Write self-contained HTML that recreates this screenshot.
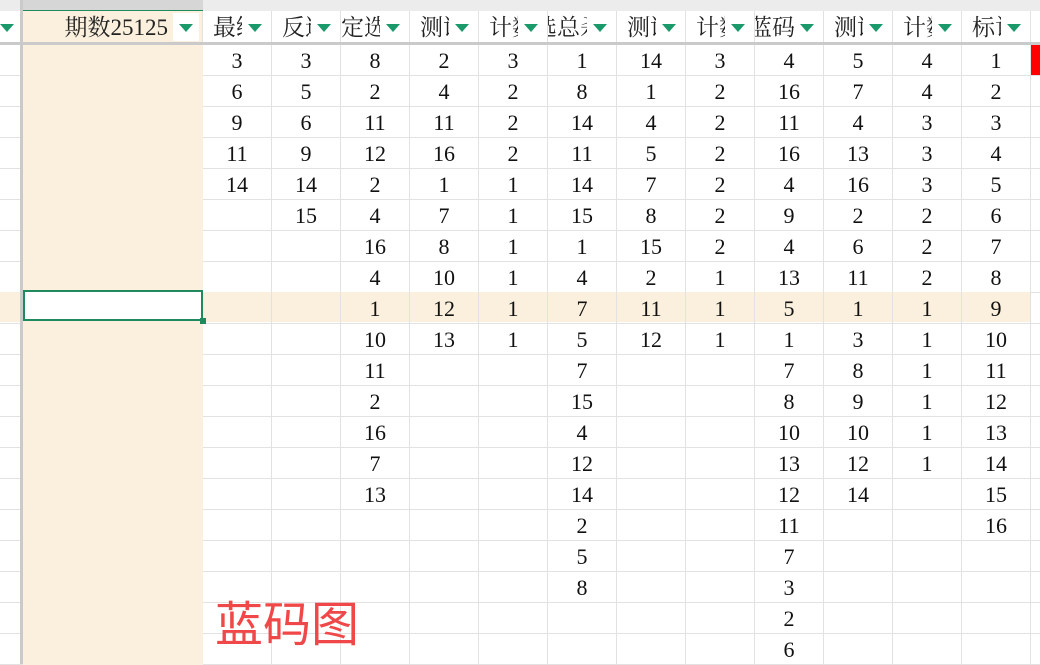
<!DOCTYPE html>
<html><head><meta charset="utf-8"><style>
body{margin:0;width:1040px;height:664px;overflow:hidden;background:#fff;position:relative;font-family:"Liberation Serif","Noto Serif CJK SC",serif;}
.abs{position:absolute}
#grid{left:0;top:45px;width:1040px;height:620px;background:repeating-linear-gradient(to bottom,transparent 0,transparent 30px,#e2e2e2 30px,#e2e2e2 31px)}
.col{position:absolute;top:45px;height:620px;border-right:1px solid #e2e2e2;box-sizing:border-box;text-align:center;font-size:22px;line-height:31px;color:#111}
.hdr{position:absolute;top:11px;height:31px;border-right:1px solid #e2e2e2;box-sizing:border-box;overflow:hidden;font-family:"Liberation Serif","Noto Serif CJK SC",serif;font-size:23px;line-height:34px;color:#222;white-space:nowrap}
.btn{position:absolute;top:13px;width:26px;height:28px;background:#fff}
.btn:after{content:"";position:absolute;left:6px;top:11px;border-left:7px solid transparent;border-right:7px solid transparent;border-top:8px solid #1a9a6a}
</style></head><body>
<div class="abs" style="left:0;top:0;width:1040px;height:11px;background:#ececec"></div>
<div class="abs" style="left:23px;top:0;width:180px;height:10px;background:#d6d6d6;border-bottom:2px solid #1e8a5e"></div>
<div class="abs" style="left:0;top:42px;width:1040px;height:3px;background:#cacaca"></div>
<div class="abs" id="grid"></div>
<div class="abs" style="left:23px;top:11px;width:180px;height:31px;background:#faf0dd"></div>
<div class="abs" style="left:23px;top:45px;width:180px;height:620px;background:#faf0dd"></div>
<div class="abs" style="left:0;top:292px;width:1030px;height:30px;background:#faf0dd"></div>
<div class="abs" style="left:20px;top:0;width:3px;height:664px;background:#cacaca"></div>
<div class="abs" style="left:1030px;top:45px;width:10px;height:30px;background:#f00"></div>
<div class="abs" style="left:23px;top:290px;width:180px;height:31px;box-sizing:border-box;border:2px solid #1e8a5e;background:#fff"></div>
<div class="abs" style="left:200px;top:318px;width:6px;height:6px;background:#1e8a5e"></div>
<div class="btn" style="left:-6px"></div>

<div class="hdr" style="left:23px;width:180px;"><span style="position:absolute;right:34px">期数25125</span></div>
<div class="hdr" style="left:203px;width:69px;padding-left:10px">最终</div>
<div class="hdr" style="left:272px;width:69px;padding-left:10px">反选</div>
<div class="hdr" style="left:341px;width:69px;padding-left:0">定选</div>
<div class="hdr" style="left:410px;width:69px;padding-left:10px">测试</div>
<div class="hdr" style="left:479px;width:69px;padding-left:10px">计数</div>
<div class="hdr" style="left:548px;width:69px;"><span style="position:absolute;left:-14px">选总杀</span></div>
<div class="hdr" style="left:617px;width:69px;padding-left:10px">测试</div>
<div class="hdr" style="left:686px;width:69px;padding-left:10px">计数</div>
<div class="hdr" style="left:755px;width:69px;"><span style="position:absolute;left:-6px">蓝码</span></div>
<div class="hdr" style="left:824px;width:69px;padding-left:10px">测试</div>
<div class="hdr" style="left:893px;width:69px;padding-left:10px">计数</div>
<div class="hdr" style="left:962px;width:69px;padding-left:10px">标记</div>
<div class="btn" style="left:173px"></div>
<div class="btn" style="left:242px"></div>
<div class="btn" style="left:311px"></div>
<div class="btn" style="left:380px"></div>
<div class="btn" style="left:449px"></div>
<div class="btn" style="left:518px"></div>
<div class="btn" style="left:587px"></div>
<div class="btn" style="left:656px"></div>
<div class="btn" style="left:725px"></div>
<div class="btn" style="left:794px"></div>
<div class="btn" style="left:863px"></div>
<div class="btn" style="left:932px"></div>
<div class="btn" style="left:1001px"></div>

<div class="col" style="left:203px;width:69px">3<br>6<br>9<br>11<br>14</div>
<div class="col" style="left:272px;width:69px">3<br>5<br>6<br>9<br>14<br>15</div>
<div class="col" style="left:341px;width:69px">8<br>2<br>11<br>12<br>2<br>4<br>16<br>4<br>1<br>10<br>11<br>2<br>16<br>7<br>13</div>
<div class="col" style="left:410px;width:69px">2<br>4<br>11<br>16<br>1<br>7<br>8<br>10<br>12<br>13</div>
<div class="col" style="left:479px;width:69px">3<br>2<br>2<br>2<br>1<br>1<br>1<br>1<br>1<br>1</div>
<div class="col" style="left:548px;width:69px">1<br>8<br>14<br>11<br>14<br>15<br>1<br>4<br>7<br>5<br>7<br>15<br>4<br>12<br>14<br>2<br>5<br>8</div>
<div class="col" style="left:617px;width:69px">14<br>1<br>4<br>5<br>7<br>8<br>15<br>2<br>11<br>12</div>
<div class="col" style="left:686px;width:69px">3<br>2<br>2<br>2<br>2<br>2<br>2<br>1<br>1<br>1</div>
<div class="col" style="left:755px;width:69px">4<br>16<br>11<br>16<br>4<br>9<br>4<br>13<br>5<br>1<br>7<br>8<br>10<br>13<br>12<br>11<br>7<br>3<br>2<br>6</div>
<div class="col" style="left:824px;width:69px">5<br>7<br>4<br>13<br>16<br>2<br>6<br>11<br>1<br>3<br>8<br>9<br>10<br>12<br>14</div>
<div class="col" style="left:893px;width:69px">4<br>4<br>3<br>3<br>3<br>2<br>2<br>2<br>1<br>1<br>1<br>1<br>1<br>1</div>
<div class="col" style="left:962px;width:69px">1<br>2<br>3<br>4<br>5<br>6<br>7<br>8<br>9<br>10<br>11<br>12<br>13<br>14<br>15<br>16</div>

<div class="abs" style="left:215px;top:596px;font-family:'Liberation Sans','Noto Sans CJK SC',sans-serif;font-size:48px;line-height:60px;color:#f04848">蓝码图</div>
</body></html>
